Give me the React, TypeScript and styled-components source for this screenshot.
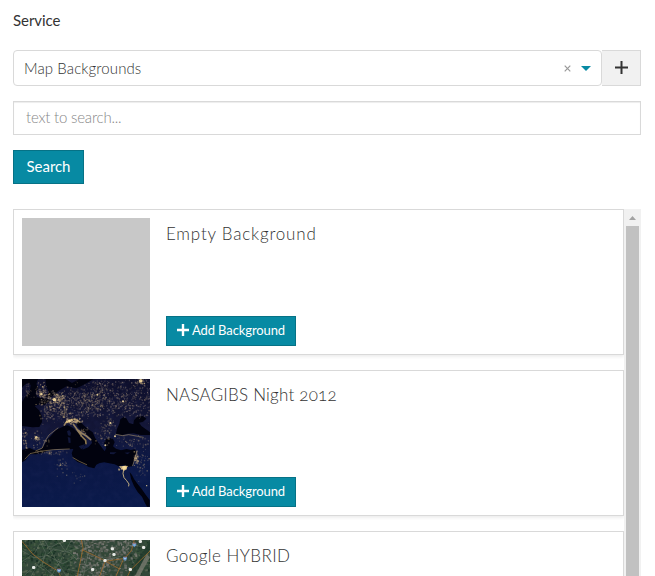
import React from "react";
import styled, { createGlobalStyle } from "styled-components";

const Global = createGlobalStyle`
  *, *::before, *::after { box-sizing: border-box; }
  html, body { margin: 0; height: 100%; overflow: hidden; background: #fff; }
  body { font-family: Lato, "Open Sans", sans-serif; font-weight: 300; font-size: 15px; color: #333; }
  button, input { font: inherit; margin: 0; }
`;

const Page = styled.main`
  display: flex;
  flex-direction: column;
  height: 576px;
  width: 655px;
  padding: 10px 14px 0 13px;
  overflow: hidden;
`;

const Label = styled.label`
  height: 20px;
  line-height: 20px;
  font-weight: 400;
  letter-spacing: -0.05px;
  margin-bottom: 20px;
`;

const SelectRow = styled.div`
  display: flex;
  height: 36px;
  margin-bottom: 15px;
`;

const Select = styled.div`
  flex: 1;
  display: flex;
  align-items: center;
  border: 1px solid #d9d9d9;
  border-radius: 4px;
  padding: 0 10px;
`;

const SelectValue = styled.span`
  flex: 1;
  line-height: 34px;
  padding-bottom: 1px;
  letter-spacing: 0.1px;
`;

const ClearIcon = styled.svg`
  width: 7px;
  height: 7px;
  margin-right: 10px;
`;

const Caret = styled.svg`
  width: 10px;
  height: 5px;
  margin-top: 1px;
`;

const PlusButton = styled.button`
  width: 39px;
  display: flex;
  align-items: center;
  justify-content: center;
  padding: 0 0 2px;
  border: 1px solid #d9d9d9;
  border-left: 0;
  background: #f1f1f1;
`;

const SearchInput = styled.input`
  height: 34px;
  flex: none;
  padding: 0 12px 2px;
  border: 1px solid #d9d9d9;
  border-radius: 0;
  box-shadow: inset 0 1px 1px rgba(0, 0, 0, 0.075);
  letter-spacing: -0.2px;
  margin-bottom: 15px;
  &::placeholder { color: #888; opacity: 1; }
`;

const Button = styled.button<{ $small?: boolean }>`
  display: flex;
  align-items: center;
  justify-content: center;
  gap: 3px;
  flex: none;
  align-self: flex-start;
  width: ${(p) => (p.$small ? 130 : 71)}px;
  height: ${(p) => (p.$small ? 30 : 34)}px;
  padding: 0 0 2px;
  border: 1px solid #067286;
  background: #078aa3;
  color: #fff;
  font-weight: 400;
  font-size: ${(p) => (p.$small ? 13 : 15)}px;
  letter-spacing: ${(p) => (p.$small ? -0.1 : -0.05)}px;
  white-space: nowrap;
`;

const Results = styled.section`
  display: flex;
  flex: 1;
  min-height: 0;
  margin-top: 25px;
`;

const CardList = styled.div`
  flex: 1;
  overflow: hidden;
`;

const Card = styled.article`
  display: flex;
  gap: 16px;
  height: 146px;
  padding: 8px;
  margin-bottom: 15px;
  border: 1px solid #d9d9d9;
  box-shadow: 0 2px 3px rgba(0, 0, 0, 0.07);
`;

const Thumb = styled.div`
  width: 128px;
  height: 128px;
  flex: none;
  background: #c8c8c8;
  overflow: hidden;
  svg { display: block; }
`;

const CardBody = styled.div`
  display: flex;
  flex-direction: column;
  justify-content: space-between;
`;

const Title = styled.h2<{ $spacing: number }>`
  margin: 6px 0 0;
  font-size: 17px;
  font-weight: 300;
  line-height: 20px;
  letter-spacing: ${(p) => p.$spacing}px;
  font-feature-settings: "onum";
`;

const Scrollbar = styled.div`
  display: flex;
  flex-direction: column;
  width: 17px;
  background: #f1f1f1;
`;

const ScrollUp = styled.div`
  height: 17px;
  display: flex;
  align-items: center;
  justify-content: center;
`;

const ScrollThumb = styled.div`
  flex: 1;
  margin: 0 2px;
  background: #c1c1c1;
`;

function Plus({ size, stroke, color }: { size: number; stroke: number; color: string }) {
  return (
    <svg width={size} height={size} viewBox={`0 0 ${size} ${size}`}>
      <path d={`M${size / 2} 0V${size}M0 ${size / 2}H${size}`} stroke={color} strokeWidth={stroke} />
    </svg>
  );
}

function random(seed: number) {
  let s = seed;
  return () => {
    s = (s + 0x6d2b79f5) | 0;
    let t = Math.imul(s ^ (s >>> 15), 1 | s);
    t = (t + Math.imul(t ^ (t >>> 7), 61 | t)) ^ t;
    return ((t ^ (t >>> 14)) >>> 0) / 4294967296;
  };
}

// Light clusters: centre x, centre y, spread x, spread y, count, strength
const clusters: number[][] = [
  [82, 68, 16, 24, 85, 0.55],
  [132, 84, 24, 14, 130, 0.6],
  [150, 120, 12, 26, 60, 0.5],
  [108, 118, 24, 28, 80, 0.35],
  [190, 92, 36, 34, 110, 0.35],
  [240, 98, 34, 28, 100, 0.4],
  [38, 58, 10, 20, 26, 0.35],
  [32, 205, 6, 24, 35, 0.55],
  [67, 203, 6, 6, 20, 0.6],
  [80, 205, 20, 22, 26, 0.4],
  [175, 152, 20, 5, 80, 0.75],
  [205, 182, 12, 10, 24, 0.5],
  [285, 158, 14, 14, 35, 0.4],
  [380, 32, 10, 8, 35, 0.65],
  [266, 190, 18, 24, 55, 0.35],
  [330, 85, 65, 42, 130, 0.35],
  [240, 60, 50, 22, 60, 0.35],
  [345, 213, 44, 14, 60, 0.35],
  [365, 265, 6, 16, 60, 0.6],
  [328, 292, 9, 4, 60, 0.8],
  [388, 285, 14, 38, 35, 0.45],
  [140, 283, 16, 12, 22, 0.5],
  [180, 315, 34, 16, 16, 0.35],
  [110, 246, 35, 5, 35, 0.4],
];

function Night() {
  const r = random(71);
  const dots: React.ReactNode[] = [];
  clusters.forEach(([cx, cy, sx, sy, count, strength], c) => {
    for (let i = 0; i < count; i++) {
      const x = cx + (r() + r() + r() - 1.5) * sx * 1.3;
      const y = cy + (r() + r() + r() - 1.5) * sy * 1.3;
      const size = 2 + r() * 3;
      dots.push(
        <rect key={`${c}-${i}`} x={x} y={y} width={size} height={size} fill={r() > 0.5 ? "#efce8c" : "#a08b75"} opacity={strength * (0.4 + r() * 0.6)} />
      );
    }
  });
  for (let i = 0; i < 600; i++) {
    const x = 86 + r() * 322;
    const y = (x < 240 ? 62 : 28) + r() * (x < 240 ? 84 : 112);
    const size = 2 + r() * 2.5;
    dots.push(<rect key={`s${i}`} x={x} y={y} width={size} height={size} fill="#b8a28b" opacity={0.12 + r() * 0.32} />);
  }
  return (
    <svg width="128" height="128" viewBox="24 27 384 384">
      <defs>
        <linearGradient id="land" x1="0" y1="0" x2="0" y2="1">
          <stop offset="0" stopColor="#0d0e2a" />
          <stop offset="0.4" stopColor="#131637" />
          <stop offset="0.65" stopColor="#0b1745" />
          <stop offset="1" stopColor="#0a1a4b" />
        </linearGradient>
        <filter id="terrain" x="0" y="0" width="1" height="1" colorInterpolationFilters="sRGB">
          <feTurbulence type="fractalNoise" baseFrequency="0.05" numOctaves="3" seed="5" />
          <feColorMatrix values="0 0 0 0 0.15  0 0 0 0 0.18  0 0 0 0 0.38  1.2 0 0 0 -0.45" />
        </filter>
      </defs>
      <rect x="24" y="27" width="384" height="384" fill="url(#land)" />
      <rect x="24" y="27" width="384" height="384" filter="url(#terrain)" opacity="0.35" />
      <g fill="#01020e">
        <path d="M24 27H72L67 42 73 55 64 70 70 82 100 86 110 91 92 104 80 102 62 108 75 121 83 137 84 156 76 171 55 172 24 168V96L34 80 47 68 50 45 40 38 24 52Z" />
        <path d="M95 27H154L174 39 196 28H238L220 38 202 48 187 55 157 49 132 64 120 75 107 84 96 82 104 65 96 48Z" />
        <path d="M24 240L47 234 62 241 81 238 91 225 99 209 111 197 125 181 140 173 151 168 161 166 177 174 189 185 204 196 216 207 219 219 210 229 205 239 223 232 234 219 231 205 217 192 203 183 191 170 187 157 199 155 209 166 222 177 236 187 243 203 254 220 263 232 272 244 277 234 270 220 277 207 288 204 297 207 302 217 297 229 306 236 321 241 338 237 350 240 363 238 367 247 361 267 355 289 341 290 328 286 314 289 302 283 286 280 271 277 257 279 247 284 241 295 224 291 210 283 190 276 177 264 173 250 178 237 160 238 134 237 107 240 84 249 65 253 47 253 34 271 24 277Z" />
        <path d="M306 191L309 177 316 161 319 148 329 141 337 145 345 159 358 163 360 151 369 141 386 138 397 146 387 155 375 158 383 169 400 181 408 187V195L381 195 358 190 341 191 321 196Z" />
        <path d="M347 307L354 315 360 327 371 342 383 357 394 373 407 390V410H399L391 395 384 380 371 366 360 348 352 329Z" />
      </g>
      <g fill="#11173a">
        <path d="M159 184L166 180 171 189 169 198 162 196ZM161 201L169 203 170 218 164 219ZM194 229L213 222 209 233 202 238Z" />
        <path d="M288 247L308 247 299 253 288 252ZM331 248L348 247 341 253Z" />
      </g>
      <g fill="none" stroke="#d8b875" strokeLinecap="round">
        <path d="M151 165L161 151 183 147 194 153M178 163L190 179 204 190 217 198 230 209M187 176L203 199 215 211 216 221" strokeWidth="5" opacity="0.65" />
        <path d="M132 174L119 184 105 195 93 213 85 234 65 243M33 267L48 251 78 244 119 239 166 237M177 263L196 274 218 284M356 287L363 266 369 242M305 193L326 197 344 194 388 202M151 108L153 126 148 143" strokeWidth="3" opacity="0.45" />
        <path d="M318 290L340 289 332 300ZM329 298L327 311 330 323 338 332 345 342 344 348" stroke="#eacd8b" strokeWidth="3" opacity="0.8" />
      </g>
      {dots}
      <g fill="#ffe4a2" opacity="0.85">
        <circle cx="67" cy="202" r="4" /><circle cx="121" cy="89" r="5" /><circle cx="82" cy="72" r="4" />
        <circle cx="380" cy="32" r="5" /><circle cx="327" cy="94" r="3" /><circle cx="289" cy="159" r="3" />
        <circle cx="250" cy="74" r="3" /><circle cx="303" cy="199" r="3" /><circle cx="274" cy="226" r="3" />
        <circle cx="330" cy="293" r="6" /><circle cx="166" cy="153" r="4" /><circle cx="398" cy="347" r="2" />
      </g>
    </svg>
  );
}

function Hybrid() {
  const r = random(29);
  const pieces = Array.from({ length: 1500 }, (_, i) => {
    const x = 20 + r() * 388;
    const y = 26 + r() * 116;
    const urban = x > 165 + r() * 40 && x < 330 + r() * 60;
    const palette = urban ? ["#767773", "#5b5d56", "#84817c", "#344634"] : ["#294832", "#385239", "#5d6a55", "#172e23"];
    return <rect key={i} x={x} y={y} width={3 + r() * 6} height={2 + r() * 5} fill={palette[Math.floor(r() * 4)]} opacity={0.4 + r() * 0.5} />;
  });
  const markers = [[151, 31], [379, 34], [295, 56], [389, 52], [300, 73], [273, 91], [59, 112], [236, 118], [349, 118]];
  return (
    <svg width="128" height="128" viewBox="24 30 384 384">
      <rect x="24" y="30" width="384" height="384" fill="#33483a" />
      {pieces}
      <path d="M408 58L361 138H338L374 83 408 34Z" fill="#203b2c" opacity="0.8" />
      <path d="M345 72L300 138H278L323 80Z" fill="#304535" opacity="0.55" />
      <path d="M408 82L377 138H363L398 72Z" fill="#77796e" opacity="0.8" />
      <g fill="none" stroke="#849080" strokeWidth="2" opacity="0.5">
        <path d="M24 95L62 69 77 42 112 51 144 34M52 138L75 94 119 57 168 68 190 91M76 30L95 68 84 107 120 138M24 62L60 83 100 77 146 101 187 80M112 138L140 91 172 30M160 118L208 127 255 96 322 78" />
        <path d="M91 30L123 85 157 138M33 134L67 105 92 120M138 40L155 65 196 54M210 30L221 79 208 138" />
      </g>
      <g fill="none" stroke="#a86d2c" strokeWidth="3" opacity="0.75">
        <path d="M24 34L57 73 88 96 112 111 132 123 139 138M202 30L207 53 201 85 190 138M361 30L352 62 327 91 306 138M206 60L238 75 270 91 315 116M257 138L273 94 333 85M408 63L373 97 349 121 341 138" />
      </g>
      {markers.map(([x, y]) => <rect key={x} x={x - 5} y={y - 4} width="10" height="9" rx="4" fill="#e8eae6" />)}
      <g fill="#5b8fc5">
        {[[135, 121], [361, 44], [333, 85]].map(([x, y]) => (
          <g key={x}><path d={`M${x - 6} ${y - 4}h12v6l-6 6-6-6Z`} /><path d={`M${x - 5} ${y - 4}h10`} stroke="#c77977" strokeWidth="2" /><path d={`M${x - 3} ${y + 1}h6`} stroke="#e0edf7" strokeWidth="2" /></g>
        ))}
      </g>
    </svg>
  );
}

const backgrounds = [
  { title: "Empty Background", spacing: 0.8, image: null },
  { title: "NASAGIBS Night 2012", spacing: 0.22, image: <Night /> },
  { title: "Google HYBRID", spacing: 0.45, image: <Hybrid /> },
];

export default function App() {
  return (
    <>
      <Global />
      <Page>
        <Label>Service</Label>
        <SelectRow>
          <Select>
            <SelectValue>Map Backgrounds</SelectValue>
            <ClearIcon viewBox="0 0 7 7"><path d="M.7.7 6.3 6.3M6.3.7.7 6.3" stroke="#999" strokeWidth="1.2" /></ClearIcon>
            <Caret viewBox="0 0 10 5"><path d="M0 0h10L5 5Z" fill="#078aa3" /></Caret>
          </Select>
          <PlusButton aria-label="Add service"><Plus size={13} stroke={2} color="#333" /></PlusButton>
        </SelectRow>
        <SearchInput placeholder="text to search..." />
        <Button>Search</Button>
        <Results>
          <CardList>
            {backgrounds.map((b) => (
              <Card key={b.title}>
                <Thumb>{b.image}</Thumb>
                <CardBody>
                  <Title $spacing={b.spacing}>{b.title}</Title>
                  <Button $small><Plus size={12} stroke={2.4} color="#fff" />Add Background</Button>
                </CardBody>
              </Card>
            ))}
          </CardList>
          <Scrollbar>
            <ScrollUp><svg width="7" height="4" viewBox="0 0 7 4"><path d="M3.5 0 7 4H0Z" fill="#a3a3a3" /></svg></ScrollUp>
            <ScrollThumb />
          </Scrollbar>
        </Results>
      </Page>
    </>
  );
}
